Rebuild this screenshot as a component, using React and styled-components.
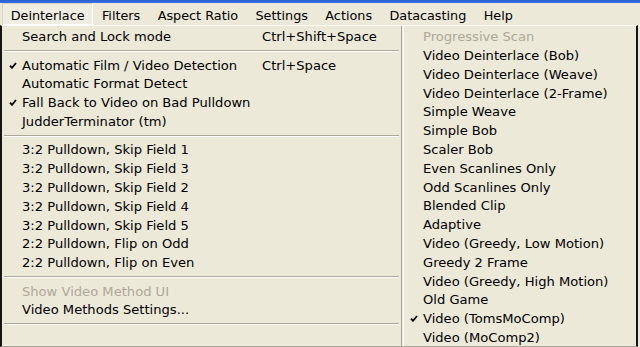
import React from "react";
import styled, { createGlobalStyle } from "styled-components";

const GlobalStyle = createGlobalStyle`
  html, body {
    margin: 0;
    padding: 0;
    background: #ece9d8;
    overflow: hidden;
  }
  body {
    font-family: "DejaVu Sans", Tahoma, Verdana, sans-serif;
    font-size: 13.1px;
    color: #000;
  }
`;

const Screen = styled.div`
  width: 640px;
  height: 347px;
  display: flex;
  flex-direction: column;
  background: #ece9d8;
`;

const TitleEdge = styled.div`
  height: 3px;
  background: linear-gradient(#2a5ed8, #3a6fe0);
`;

const MenuBar = styled.div`
  height: 22px;
  display: flex;
  align-items: stretch;
  padding-left: 2px;
  font-size: 12.8px;
`;

const BarItem = styled.div`
  display: flex;
  align-items: center;
  padding: 2px 7.7px 0;
  white-space: nowrap;
  box-sizing: border-box;
  border: 1px solid transparent;
  ${({ $open }) =>
    $open &&
    `
    background: #f0eee2;
    border-color: #d8d4c4 #fff #fff #d8d4c4;
  `}
`;

const Dropdown = styled.div`
  width: 638px;
  flex: 1;
  min-height: 0;
  overflow: hidden;
  box-sizing: border-box;
  display: flex;
  border-top: 1px solid #fbfaf5;
  border-left: 2px solid #141414;
  border-right: 2px solid #141414;
  border-bottom: 1px solid #a8a596;
  padding-top: 1.3px;
`;

const Column = styled.div`
  width: ${({ $width }) => $width}px;
  display: flex;
  flex-direction: column;
`;

const Divider = styled.div`
  width: 1px;
  margin-top: -2px;
  border-left: 1px solid #aca899;
  border-right: 1px solid #fff;
`;

const Row = styled.div`
  height: 18.8px;
  flex: none;
  display: grid;
  grid-template-columns: ${({ $indent }) => $indent}px 240px auto;
  align-items: center;
  white-space: nowrap;
  color: ${({ $disabled }) => ($disabled ? "#aca899" : "#000")};
`;

const CheckCell = styled.span`
  display: flex;
  align-items: center;
  padding-left: ${({ $indent }) => $indent - 13}px;
`;

const Separator = styled.div`
  height: 9.6px;
  flex: none;
  display: flex;
  align-items: center;
  padding: 0 2px;

  &::before {
    content: "";
    flex: 1;
    border-top: 1px solid #aca899;
    border-bottom: 1px solid #fff;
  }
`;

const Check = () => (
  <svg width="8" height="7" viewBox="0 0 8 7">
    <path d="M1 3.6 L3 5.8 L7 1" fill="none" stroke="#000" strokeWidth="1.8" />
  </svg>
);

const left = [
  { label: "Search and Lock mode", key: "Ctrl+Shift+Space" },
  "sep",
  { label: "Automatic Film / Video Detection", key: "Ctrl+Space", checked: true },
  { label: "Automatic Format Detect" },
  { label: "Fall Back to Video on Bad Pulldown", checked: true },
  { label: "JudderTerminator (tm)" },
  "sep",
  { label: "3:2 Pulldown, Skip Field 1" },
  { label: "3:2 Pulldown, Skip Field 3" },
  { label: "3:2 Pulldown, Skip Field 2" },
  { label: "3:2 Pulldown, Skip Field 4" },
  { label: "3:2 Pulldown, Skip Field 5" },
  { label: "2:2 Pulldown, Flip on Odd" },
  { label: "2:2 Pulldown, Flip on Even" },
  "sep",
  { label: "Show Video Method UI", disabled: true },
  { label: "Video Methods Settings..." },
  "sep",
];

const right = [
  { label: "Progressive Scan", disabled: true },
  { label: "Video Deinterlace (Bob)" },
  { label: "Video Deinterlace (Weave)" },
  { label: "Video Deinterlace (2-Frame)" },
  { label: "Simple Weave" },
  { label: "Simple Bob" },
  { label: "Scaler Bob" },
  { label: "Even Scanlines Only" },
  { label: "Odd Scanlines Only" },
  { label: "Blended Clip" },
  { label: "Adaptive" },
  { label: "Video (Greedy, Low Motion)" },
  { label: "Greedy 2 Frame" },
  { label: "Video (Greedy, High Motion)" },
  { label: "Old Game" },
  { label: "Video (TomsMoComp)", checked: true },
  { label: "Video (MoComp2)" },
];

const menus = ["Deinterlace", "Filters", "Aspect Ratio", "Settings", "Actions", "Datacasting", "Help"];

function MenuList({ items, indent }) {
  return items.map((item, i) =>
    item === "sep" ? (
      <Separator key={i} />
    ) : (
      <Row key={i} $indent={indent} $disabled={item.disabled}>
        <CheckCell $indent={indent}>{item.checked && <Check />}</CheckCell>
        <span>{item.label}</span>
        <span>{item.key}</span>
      </Row>
    )
  );
}

export default function App() {
  return (
    <Screen>
      <GlobalStyle />
      <TitleEdge />
      <MenuBar>
        {menus.map((m, i) => (
          <BarItem key={m} $open={i === 0}>
            {m}
          </BarItem>
        ))}
      </MenuBar>
      <Dropdown>
        <Column $width={400}>
          <MenuList items={left} indent={20} />
        </Column>
        <Divider />
        <Column $width={232}>
          <MenuList items={right} indent={19} />
        </Column>
      </Dropdown>
    </Screen>
  );
}
